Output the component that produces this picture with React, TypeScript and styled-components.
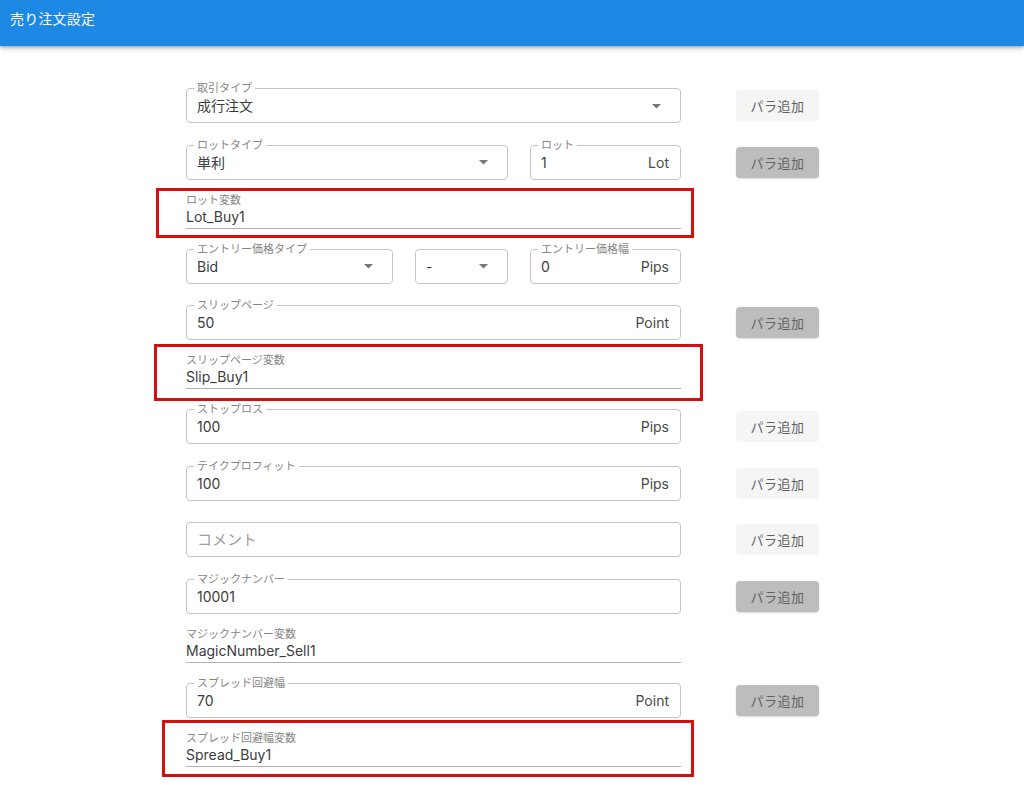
import React from "react";
import styled, { createGlobalStyle, css } from "styled-components";

const GlobalStyle = createGlobalStyle`
  html, body {
    margin: 0;
    padding: 0;
    background: #ffffff;
    font-family: Inter, "Noto Sans CJK JP", sans-serif;
    color: #3c3c3c;
  }
  * { box-sizing: border-box; }
`;

const AppBar = styled.header`
  height: 46px;
  background: #1e88e5;
  box-shadow: 0 2px 5px rgba(0, 0, 0, 0.28), 0 1px 2px rgba(0, 0, 0, 0.14);
  padding: 11px 0 0 10px;
  color: #ffffff;
  font-size: 14px;
  line-height: 16px;
  letter-spacing: 0.2px;
`;

const Form = styled.main`
  padding: 42px 0 0 186px;
`;

const Row = styled.div<{ $mb?: number }>`
  display: grid;
  grid-template-columns: 495px 83px;
  column-gap: 55px;
  align-items: center;
  margin-bottom: ${(p) => p.$mb ?? 21.5}px;
`;

const Fields = styled.div`
  display: flex;
  gap: 22px;
`;

const Outlined = styled.div<{ $w?: number }>`
  position: relative;
  height: 35px;
  border: 1px solid #c4c4c4;
  border-radius: 4px;
  display: flex;
  align-items: center;
  padding: 1px 11px 0 10px;
  ${(p) =>
    p.$w
      ? css`
          width: ${p.$w}px;
          flex: none;
        `
      : css`
          flex: 1;
        `}
`;

const Legend = styled.span`
  position: absolute;
  top: -8px;
  left: 7px;
  padding: 0 3px;
  background: #ffffff;
  font-size: 11px;
  line-height: 14px;
  color: #858585;
  white-space: nowrap;
`;

const Value = styled.span<{ $placeholder?: boolean }>`
  flex: 1;
  font-size: ${(p) => (p.$placeholder ? 15 : 14)}px;
  line-height: 20px;
  color: ${(p) => (p.$placeholder ? "#9e9e9e" : "#3c3c3c")};
  white-space: nowrap;
`;

const Unit = styled.span`
  font-size: 14px;
  line-height: 20px;
  color: #4a4a4a;
`;

const Caret = styled.svg`
  width: 9px;
  height: 5px;
  margin-right: 8px;
  flex: none;
`;

const VarField = styled.div<{ $mb?: number }>`
  position: relative;
  width: 495px;
  margin: -9.5px 0 ${(p) => p.$mb ?? 20}px;
  border-bottom: 1px solid #b0b0b0;
  padding: 2px 0 1px;
`;

const VarLabel = styled.div`
  font-size: 11px;
  line-height: 13px;
  color: #858585;
`;

const VarValue = styled.div`
  font-size: 14px;
  line-height: 20px;
  color: #3c3c3c;
`;

const Highlight = styled.div<{ $t: number; $r: number; $b: number; $l: number }>`
  position: absolute;
  top: ${(p) => p.$t}px;
  right: ${(p) => p.$r}px;
  bottom: ${(p) => p.$b}px;
  left: ${(p) => p.$l}px;
  border: 3px solid #d80d0d;
  pointer-events: none;
`;

const ParamButton = styled.button<{ $active?: boolean }>`
  width: 83px;
  height: 31px;
  border: none;
  border-radius: 4px;
  font-family: inherit;
  font-size: 13px;
  color: #616161;
  letter-spacing: 0.5px;
  cursor: pointer;
  background: ${(p) => (p.$active ? "#bdbdbd" : "#f5f5f5")};
  box-shadow: ${(p) => (p.$active ? "0 1px 2px rgba(0,0,0,0.15)" : "none")};
`;

type FieldProps = {
  label?: string;
  value: string;
  unit?: string;
  select?: boolean;
  width?: number;
  placeholder?: boolean;
};

function Field({ label, value, unit, select, width, placeholder }: FieldProps) {
  return (
    <Outlined $w={width}>
      {label && <Legend>{label}</Legend>}
      <Value $placeholder={placeholder}>{value}</Value>
      {unit && <Unit>{unit}</Unit>}
      {select && (
        <Caret viewBox="0 0 9 5">
          <path d="M0 0 L9 0 L4.5 4.5 Z" fill="#757575" />
        </Caret>
      )}
    </Outlined>
  );
}

type Box = { t: number; r: number; b: number; l: number };

function Variable({ label, value, mark, mb }: { label: string; value: string; mark?: Box; mb?: number }) {
  return (
    <VarField $mb={mb}>
      <VarLabel>{label}</VarLabel>
      <VarValue>{value}</VarValue>
      {mark && <Highlight $t={mark.t} $r={mark.r} $b={mark.b} $l={mark.l} />}
    </VarField>
  );
}

export default function App() {
  return (
    <>
      <GlobalStyle />
      <AppBar>売り注文設定</AppBar>
      <Form>
        <Row>
          <Field label="取引タイプ" value="成行注文" select />
          <ParamButton>パラ追加</ParamButton>
        </Row>
        <Row>
          <Fields>
            <Field label="ロットタイプ" value="単利" select />
            <Field label="ロット" value="1" unit="Lot" width={151} />
          </Fields>
          <ParamButton $active>パラ追加</ParamButton>
        </Row>
        <Variable label="ロット変数" value="Lot_Buy1" mark={{ t: -4, r: -13, b: -10, l: -30 }} />
        <Row>
          <Fields>
            <Field label="エントリー価格タイプ" value="Bid" select />
            <Field value="-" select width={93} />
            <Field label="エントリー価格幅" value="0" unit="Pips" width={151} />
          </Fields>
          <span />
        </Row>
        <Row>
          <Field label="スリップページ" value="50" unit="Point" />
          <ParamButton $active>パラ追加</ParamButton>
        </Row>
        <Variable label="スリップページ変数" value="Slip_Buy1" mark={{ t: -8, r: -22, b: -13, l: -32 }} />
        <Row>
          <Field label="ストップロス" value="100" unit="Pips" />
          <ParamButton>パラ追加</ParamButton>
        </Row>
        <Row>
          <Field label="テイクプロフィット" value="100" unit="Pips" />
          <ParamButton>パラ追加</ParamButton>
        </Row>
        <Row>
          <Field value="コメント" placeholder />
          <ParamButton>パラ追加</ParamButton>
        </Row>
        <Row>
          <Field label="マジックナンバー" value="10001" />
          <ParamButton $active>パラ追加</ParamButton>
        </Row>
        <Variable label="マジックナンバー変数" value="MagicNumber_Sell1" />
        <Row>
          <Field label="スプレッド回避幅" value="70" unit="Point" />
          <ParamButton $active>パラ追加</ParamButton>
        </Row>
        <Variable label="スプレッド回避幅変数" value="Spread_Buy1" mark={{ t: -10, r: -13, b: -11, l: -24 }} />
      </Form>
    </>
  );
}
